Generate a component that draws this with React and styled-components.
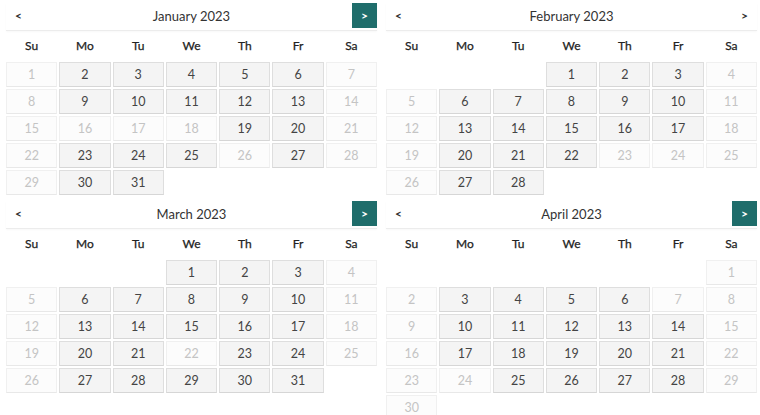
import React from "react";
import styled, { createGlobalStyle } from "styled-components";

const GlobalStyle = createGlobalStyle`
  html, body {
    margin: 0;
    padding: 0;
    background: #ffffff;
    font-family: "Lato", "Open Sans", sans-serif;
    color: #333;
  }
`;

const Page = styled.div`
  display: grid;
  grid-template-columns: 371px 371px;
  column-gap: 9px;
  row-gap: 6px;
  padding: 3px 0 0 6px;
  width: 760px;
  height: 415px;
  box-sizing: border-box;
  overflow: hidden;
`;

const Calendar = styled.div`
  display: flex;
  flex-direction: column;
`;

const Header = styled.div`
  display: flex;
  align-items: flex-start;
  justify-content: space-between;
  height: 28px;
  box-sizing: border-box;
  border-bottom: 1px solid #ececec;
  box-shadow: 0 1px 2px rgba(0, 0, 0, 0.03);
`;

const Title = styled.div`
  flex: 1;
  text-align: center;
  font-size: 13px;
  line-height: 27px;
  color: #333;
`;

const NavButton = styled.button`
  width: 25px;
  height: 25px;
  padding: 0;
  border: none;
  font-family: inherit;
  font-size: 12px;
  font-weight: 700;
  line-height: 25px;
  cursor: pointer;
  background: ${(p) => (p.$active ? "#1f6d6b" : "transparent")};
  color: ${(p) => (p.$active ? "#ffffff" : "#333")};
`;

const Weekdays = styled.div`
  display: grid;
  grid-template-columns: repeat(7, 1fr);
  column-gap: 2px;
  height: 29px;
  align-items: center;
`;

const Weekday = styled.div`
  text-align: center;
  font-size: 12px;
  font-weight: 400;
  color: #222;
  -webkit-text-stroke: 0.25px #222;
`;

const Days = styled.div`
  display: grid;
  grid-template-columns: repeat(7, 1fr);
  grid-auto-rows: 25px;
  gap: 2px;
  padding-top: 2px;
`;

const Day = styled.div`
  display: flex;
  align-items: center;
  justify-content: center;
  box-sizing: border-box;
  font-size: 12.5px;
  border: 1px solid ${(p) => (p.$disabled ? "#f0f0f0" : "#dedede")};
  background: ${(p) => (p.$disabled ? "#fcfcfc" : "#f4f4f4")};
  color: ${(p) => (p.$disabled ? "#c4c4c4" : "#444")};
  border-bottom-color: ${(p) => (p.$disabled ? "#e8e8e8" : "#d6d6d6")};
`;

const Empty = styled.div``;

const WEEKDAYS = ["Su", "Mo", "Tu", "We", "Th", "Fr", "Sa"];

const months = [
  {
    name: "January 2023",
    start: 0,
    days: 31,
    active: true,
    enabled: [2, 3, 4, 5, 6, 9, 10, 11, 12, 13, 19, 20, 23, 24, 25, 27, 30, 31],
  },
  {
    name: "February 2023",
    start: 3,
    days: 28,
    active: false,
    enabled: [1, 2, 3, 6, 7, 8, 9, 10, 13, 14, 15, 16, 17, 20, 21, 22, 27, 28],
  },
  {
    name: "March 2023",
    start: 3,
    days: 31,
    active: true,
    enabled: [
      1, 2, 3, 6, 7, 8, 9, 10, 13, 14, 15, 16, 17, 20, 21, 23, 24, 27, 28, 29,
      30, 31,
    ],
  },
  {
    name: "April 2023",
    start: 6,
    days: 30,
    active: true,
    enabled: [3, 4, 5, 6, 10, 11, 12, 13, 14, 17, 18, 19, 20, 21, 25, 26, 27, 28],
  },
];

const Month = ({ month }) => {
  const blanks = Array.from({ length: month.start });
  const days = Array.from({ length: month.days }, (_, i) => i + 1);
  return (
    <Calendar>
      <Header>
        <NavButton>&lt;</NavButton>
        <Title>{month.name}</Title>
        <NavButton $active={month.active}>&gt;</NavButton>
      </Header>
      <Weekdays>
        {WEEKDAYS.map((d) => (
          <Weekday key={d}>{d}</Weekday>
        ))}
      </Weekdays>
      <Days>
        {blanks.map((_, i) => (
          <Empty key={"b" + i} />
        ))}
        {days.map((d) => (
          <Day key={d} $disabled={!month.enabled.includes(d)}>
            {d}
          </Day>
        ))}
      </Days>
    </Calendar>
  );
};

export default function App() {
  return (
    <>
      <GlobalStyle />
      <Page>
        {months.map((m) => (
          <Month key={m.name} month={m} />
        ))}
      </Page>
    </>
  );
}
